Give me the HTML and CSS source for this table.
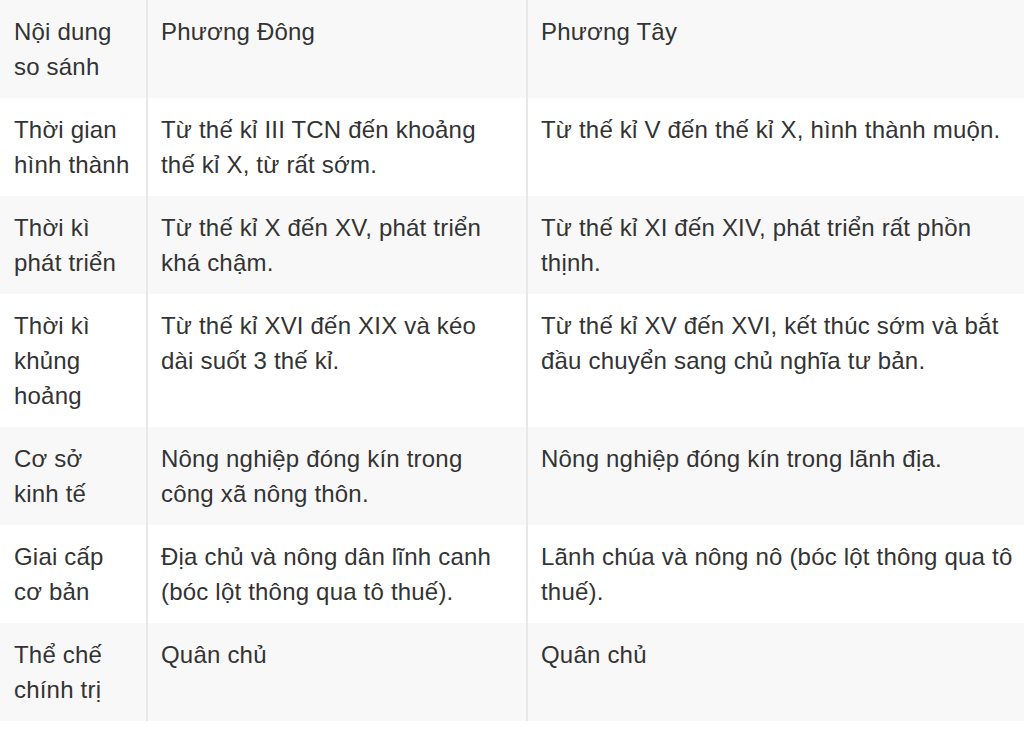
FILE: index.html
```html
<!DOCTYPE html>
<html lang="vi">
<head>
<meta charset="utf-8">
<link rel="stylesheet" href="styles.css">
</head>
<body>
<table class="cmp">
  <colgroup>
    <col class="c1"><col class="c2"><col class="c3">
  </colgroup>
  <tr><td>Nội dung so sánh</td><td>Phương Đông</td><td>Phương Tây</td></tr>
  <tr><td>Thời gian hình thành</td><td>Từ thế kỉ III TCN đến khoảng thế kỉ X, từ rất sớm.</td><td>Từ thế kỉ V đến thế kỉ X, hình thành muộn.</td></tr>
  <tr><td>Thời kì phát triển</td><td>Từ thế kỉ X đến XV, phát triển khá chậm.</td><td>Từ thế kỉ XI đến XIV, phát triển rất phồn thịnh.</td></tr>
  <tr><td>Thời kì khủng hoảng</td><td>Từ thế kỉ XVI đến XIX và kéo dài suốt 3 thế kỉ.</td><td>Từ thế kỉ XV đến XVI, kết thúc sớm và bắt đầu chuyển sang chủ nghĩa tư bản.</td></tr>
  <tr><td>Cơ sở kinh tế</td><td>Nông nghiệp đóng kín trong công xã nông thôn.</td><td>Nông nghiệp đóng kín trong lãnh địa.</td></tr>
  <tr><td>Giai cấp cơ bản</td><td>Địa chủ và nông dân lĩnh canh (bóc lột thông qua tô thuế).</td><td>Lãnh chúa và nông nô (bóc lột thông qua tô thuế).</td></tr>
  <tr><td>Thể chế chính trị</td><td>Quân chủ</td><td>Quân chủ</td></tr>
</table>
</body>
</html>
```
FILE: styles.css
```css
html, body {
  margin: 0;
  padding: 0;
  background: #ffffff;
}
body {
  font-family: "Liberation Sans", Arial, sans-serif;
  font-size: 24px;
  letter-spacing: 0.2px;
  line-height: 35px;
  color: #333333;
}
.cmp {
  width: 1024px;
  border-collapse: collapse;
  table-layout: fixed;
}
.c1 { width: 147px; }
.c2 { width: 380px; }
.c3 { width: 497px; }
.cmp td {
  vertical-align: top;
  padding: 14px 14px 14px 13px;
  border-left: 2px solid #e8e8e8;
}
.cmp td:first-child {
  border-left: none;
  padding-left: 14px;
  padding-right: 15px;
}
.cmp td:last-child {
  padding-right: 4px;
}
.cmp tr:nth-child(odd) td {
  background: #f8f8f8;
}
```
